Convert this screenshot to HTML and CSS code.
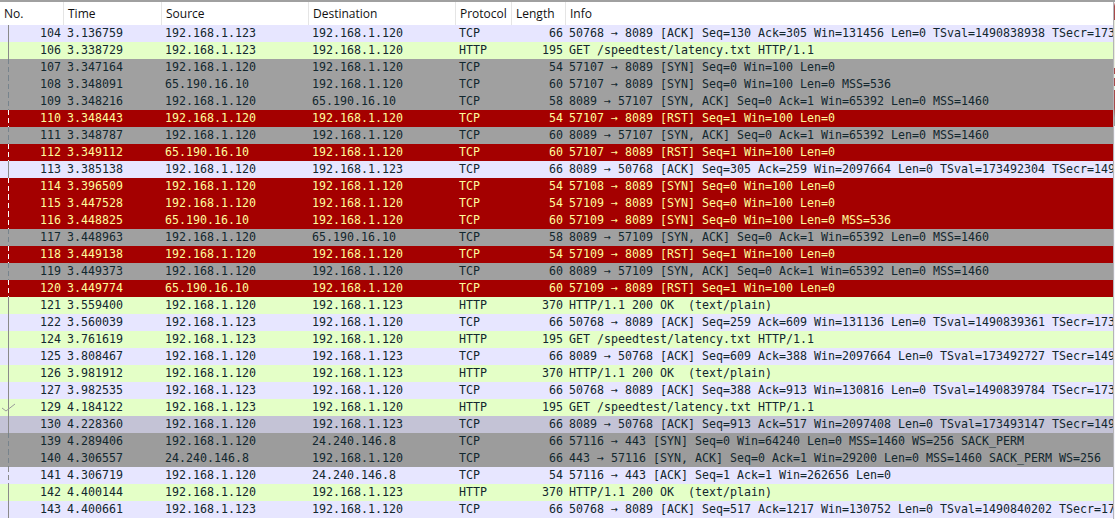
FILE: index.html
```html
<!DOCTYPE html>
<html lang="en">
<head>
<meta charset="utf-8">
<title>Packet list</title>
<link rel="stylesheet" href="styles.css">
</head>
<body>
<div class="list">
<div class="head">
<span class="h no">No.</span><span class="h time">Time</span><span class="h src">Source</span><span class="h dst">Destination</span><span class="h proto">Protocol</span><span class="h len">Length</span><span class="h info">Info</span>
</div>
<div id="rows"></div>
<div class="strip"></div>
</div>
<script src="app.js"></script>
</body>
</html>
```
FILE: styles.css
```css
html, body { margin: 0; padding: 0; background: #fff; overflow: hidden; }
.list { width: 1115px; height: 519px; overflow: hidden; position: relative; border-top: 2px solid #a0a0a0; box-sizing: border-box; }
.head { display: flex; height: 23px; background: #fff; font: 12px/23px "Open Sans", sans-serif; color: #111; }
.h { box-sizing: border-box; padding-left: 4px; border-right: 1px solid #e5e5e5; white-space: nowrap; }
.h.info { border-right: 0; }
.no { width: 64px; }
.time { width: 98px; }
.src { width: 147px; }
.dst { width: 147px; }
.proto { width: 56px; }
.len { width: 54px; }
.info { flex: 1; }
.row { position: relative; display: flex; height: 17px; font: 11.63px/17px "DejaVu Sans Mono", monospace; color: #12272e; white-space: pre; }
.row span { display: block; overflow: hidden; }
.row::before { content: ""; position: absolute; left: 8px; top: 0; bottom: 0; width: 1px; background: #8a8a8a; }
.row.dash::before { background: repeating-linear-gradient(to bottom, #77838c 0, #77838c 5px, transparent 5px, transparent 8px); }
.row.dash.red::before { background: repeating-linear-gradient(to bottom, #fff 0, #fff 5px, transparent 5px, transparent 8px); }
.row.dash.tcp::before { background: repeating-linear-gradient(to bottom, #8a8a8a 0, #8a8a8a 5px, transparent 5px, transparent 8px); }
.check { position: absolute; left: 0; top: 0; }
.c-no { width: 61px; text-align: right; flex: none; }
.c-time { width: 102px; padding-left: 6px; box-sizing: border-box; flex: none; }
.c-src { width: 147px; padding-left: 2px; box-sizing: border-box; flex: none; }
.c-dst { width: 147px; padding-left: 2px; box-sizing: border-box; flex: none; }
.c-proto { width: 50px; padding-left: 2px; box-sizing: border-box; flex: none; }
.c-len { width: 56px; text-align: right; flex: none; }
.c-info { flex: 1; padding-left: 6px; }
.tcp { background: #e7e6ff; }
.http { background: #e4ffc7; }
.gray { background: #a0a0a0; }
.red { background: #a40000; color: #fffc9c; }
.sel { background: #c4c3d6; }
.dgray { background: #9c9c9c; }
.strip { position: absolute; right: 0; top: 0; bottom: 0; width: 1px; border-left: 1px solid #b4b4b8;
  background: linear-gradient(to bottom, #fff 0, #a94a4a 4px, #a94a4a 18px, #e8ecdc 18px, #e8ecdc 66px, #a94a4a 66px, #a94a4a 72px, #e8ecdc 72px, #e8ecdc 76px, #a94a4a 76px, #a94a4a 84px, #e8ecdc 84px, #e8ecdc 88px, #a94a4a 88px, #a94a4a 106px, #a0a0a0 116px, #a0a0a0 124px, #f2f2f8 124px, #f2f2f8 100%); }
```
FILE: app.js
```js
var data = [
["tcp","104","3.136759","192.168.1.123","192.168.1.120","TCP","66","50768 → 8089 [ACK] Seq=130 Ack=305 Win=131456 Len=0 TSval=1490838938 TSecr=173"],
["http","106","3.338729","192.168.1.123","192.168.1.120","HTTP","195","GET /speedtest/latency.txt HTTP/1.1"],
["gray dash","107","3.347164","192.168.1.120","192.168.1.120","TCP","54","57107 → 8089 [SYN] Seq=0 Win=100 Len=0"],
["gray dash","108","3.348091","65.190.16.10","192.168.1.120","TCP","60","57107 → 8089 [SYN] Seq=0 Win=100 Len=0 MSS=536"],
["gray dash","109","3.348216","192.168.1.120","65.190.16.10","TCP","58","8089 → 57107 [SYN, ACK] Seq=0 Ack=1 Win=65392 Len=0 MSS=1460"],
["red dash","110","3.348443","192.168.1.120","192.168.1.120","TCP","54","57107 → 8089 [RST] Seq=1 Win=100 Len=0"],
["gray dash","111","3.348787","192.168.1.120","192.168.1.120","TCP","60","8089 → 57107 [SYN, ACK] Seq=0 Ack=1 Win=65392 Len=0 MSS=1460"],
["red dash","112","3.349112","65.190.16.10","192.168.1.120","TCP","60","57107 → 8089 [RST] Seq=1 Win=100 Len=0"],
["tcp","113","3.385138","192.168.1.120","192.168.1.123","TCP","66","8089 → 50768 [ACK] Seq=305 Ack=259 Win=2097664 Len=0 TSval=173492304 TSecr=149"],
["red dash","114","3.396509","192.168.1.120","192.168.1.120","TCP","54","57108 → 8089 [SYN] Seq=0 Win=100 Len=0"],
["red dash","115","3.447528","192.168.1.120","192.168.1.120","TCP","54","57109 → 8089 [SYN] Seq=0 Win=100 Len=0"],
["red dash","116","3.448825","65.190.16.10","192.168.1.120","TCP","60","57109 → 8089 [SYN] Seq=0 Win=100 Len=0 MSS=536"],
["gray dash","117","3.448963","192.168.1.120","65.190.16.10","TCP","58","8089 → 57109 [SYN, ACK] Seq=0 Ack=1 Win=65392 Len=0 MSS=1460"],
["red dash","118","3.449138","192.168.1.120","192.168.1.120","TCP","54","57109 → 8089 [RST] Seq=1 Win=100 Len=0"],
["gray dash","119","3.449373","192.168.1.120","192.168.1.120","TCP","60","8089 → 57109 [SYN, ACK] Seq=0 Ack=1 Win=65392 Len=0 MSS=1460"],
["red dash","120","3.449774","65.190.16.10","192.168.1.120","TCP","60","57109 → 8089 [RST] Seq=1 Win=100 Len=0"],
["http","121","3.559400","192.168.1.120","192.168.1.123","HTTP","370","HTTP/1.1 200 OK  (text/plain)"],
["tcp","122","3.560039","192.168.1.123","192.168.1.120","TCP","66","50768 → 8089 [ACK] Seq=259 Ack=609 Win=131136 Len=0 TSval=1490839361 TSecr=173"],
["http","124","3.761619","192.168.1.123","192.168.1.120","HTTP","195","GET /speedtest/latency.txt HTTP/1.1"],
["tcp","125","3.808467","192.168.1.120","192.168.1.123","TCP","66","8089 → 50768 [ACK] Seq=609 Ack=388 Win=2097664 Len=0 TSval=173492727 TSecr=149"],
["http","126","3.981912","192.168.1.120","192.168.1.123","HTTP","370","HTTP/1.1 200 OK  (text/plain)"],
["tcp","127","3.982535","192.168.1.123","192.168.1.120","TCP","66","50768 → 8089 [ACK] Seq=388 Ack=913 Win=130816 Len=0 TSval=1490839784 TSecr=173"],
["http","129","4.184122","192.168.1.123","192.168.1.120","HTTP","195","GET /speedtest/latency.txt HTTP/1.1"],
["sel","130","4.228360","192.168.1.120","192.168.1.123","TCP","66","8089 → 50768 [ACK] Seq=913 Ack=517 Win=2097408 Len=0 TSval=173493147 TSecr=149"],
["dgray dash","139","4.289406","192.168.1.120","24.240.146.8","TCP","66","57116 → 443 [SYN] Seq=0 Win=64240 Len=0 MSS=1460 WS=256 SACK_PERM"],
["dgray dash","140","4.306557","24.240.146.8","192.168.1.120","TCP","66","443 → 57116 [SYN, ACK] Seq=0 Ack=1 Win=29200 Len=0 MSS=1460 SACK_PERM WS=256"],
["tcp dash","141","4.306719","192.168.1.120","24.240.146.8","TCP","54","57116 → 443 [ACK] Seq=1 Ack=1 Win=262656 Len=0"],
["http","142","4.400144","192.168.1.120","192.168.1.123","HTTP","370","HTTP/1.1 200 OK  (text/plain)"],
["tcp","143","4.400661","192.168.1.123","192.168.1.120","TCP","66","50768 → 8089 [ACK] Seq=517 Ack=1217 Win=130752 Len=0 TSval=1490840202 TSecr=173"]
];
var cols = ["c-no","c-time","c-src","c-dst","c-proto","c-len","c-info"];
var root = document.getElementById("rows");
data.forEach(function (d) {
  var r = document.createElement("div");
  r.className = "row " + d[0];
  cols.forEach(function (c, i) {
    var s = document.createElement("span");
    s.className = c;
    s.textContent = d[i + 1];
    r.appendChild(s);
  });
  if (d[1] === "129") {
    r.insertAdjacentHTML("beforeend", '<svg class="check" width="17" height="17" viewBox="0 0 17 17"><polyline points="2,9 6,12 15,5" fill="none" stroke="#9a9a9a" stroke-width="1"/></svg>');
  }
  root.appendChild(r);
});
```
